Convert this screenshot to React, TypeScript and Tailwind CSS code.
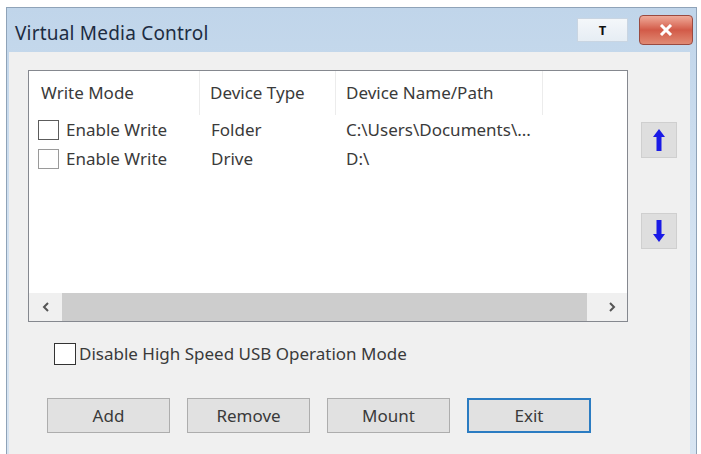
const font = { fontFamily: '"Noto Sans", "Open Sans", sans-serif' };

const CheckBox = ({ tone }: { tone: string }) => (
    <span className={`block h-[20px] w-[21px] shrink-0 border bg-white ${tone}`} />
);

const ArrowBtn = ({ down }: { down?: boolean }) => (
    <div className="flex h-[36px] w-[36px] items-center justify-center border border-[#cfcfcf] bg-[#dedede]">
        <svg width="14" height="24" viewBox="0 0 14 24" className={down ? "rotate-180" : ""}>
            <path d="M7 1 L13 9 L9.5 9 L9.5 23 L4.5 23 L4.5 9 L1 9 Z" fill="#1a1ae6" />
        </svg>
    </div>
);

const Chevron = ({ right }: { right?: boolean }) => (
    <svg width="8" height="10" viewBox="0 0 8 10">
        <path d={right ? "M2 1 L6 5 L2 9" : "M6 1 L2 5 L6 9"} stroke="#555" strokeWidth="2" fill="none" />
    </svg>
);

const rows = [
    { type: "Folder", path: "C:\\Users\\Documents\\...", tone: "border-[#5c5c5c]" },
    { type: "Drive", path: "D:\\", tone: "border-[#9a9a9a]" },
];

export default function App() {
    return (
        <div className="h-[454px] w-[701px] overflow-hidden bg-white pl-[6px] pt-[7px] text-[17px] leading-[22px] text-[#3a3a3a]" style={font}>
            <div className="flex h-[460px] w-[691px] flex-col border border-[#8fa3b8] bg-gradient-to-b from-[#c0d5ea] via-[#d3e2f1] to-[#d8e5f2]">
                {/* title bar */}
                <div className="flex h-[44px] shrink-0 items-start">
                    <span className="ml-[8px] mt-[12px] text-[19px] leading-[26px] tracking-[0.2px] text-[#1d2c42]">Virtual Media Control</span>
                    <div className="ml-auto mr-[3px] mt-[7px] flex items-start gap-[11px]">
                        <div className="mt-[3px] flex h-[24px] w-[51px] items-center justify-center border border-[#c9d5e2] bg-gradient-to-b from-[#f4f7fa] to-[#e6edf4] text-[13px] font-bold leading-none text-[#111]">
                            T
                        </div>
                        <div className="flex h-[30px] w-[54px] items-center justify-center rounded-[4px] border border-[#9a4a40] bg-gradient-to-b from-[#eeaa9a] via-[#d25a48] to-[#e08a74]">
                            <svg width="14" height="12" viewBox="0 0 14 12">
                                <path d="M2 1 L12 11 M12 1 L2 11" stroke="white" strokeWidth="3" />
                            </svg>
                        </div>
                    </div>
                </div>
                {/* client area */}
                <div className="ml-[2px] mr-[6px] flex-1 bg-[#f0f0f0] pl-[19px] pt-[18px]">
                    <div className="flex items-start">
                        <div className="flex h-[252px] w-[600px] flex-col border border-[#85888f] bg-white">
                            <div className="flex h-[44px] shrink-0 items-center">
                                <div className="flex h-full w-[171px] items-center border-r border-[#ececec] pl-[12px]">Write Mode</div>
                                <div className="flex h-full w-[136px] items-center border-r border-[#ececec] pl-[10px]">Device Type</div>
                                <div className="flex h-full w-[207px] items-center border-r border-[#ececec] pl-[10px]">Device Name/Path</div>
                            </div>
                            {rows.map((r) => (
                                <div key={r.type} className="flex h-[29px] items-center">
                                    <div className="flex w-[171px] items-center gap-[7px] pl-[9px]">
                                        <CheckBox tone={r.tone} />
                                        <span>Enable Write</span>
                                    </div>
                                    <div className="w-[136px] pl-[11px]">{r.type}</div>
                                    <div className="pl-[10px]">{r.path}</div>
                                </div>
                            ))}
                            <div className="mt-auto flex h-[28px] shrink-0">
                                <div className="flex w-[33px] items-center justify-center bg-[#f0f0f0]">
                                    <Chevron />
                                </div>
                                <div className="flex-1 bg-[#cdcdcd]" />
                                <div className="flex w-[40px] items-center justify-center bg-[#f0f0f0] pl-[10px]">
                                    <Chevron right />
                                </div>
                            </div>
                        </div>
                        <div className="ml-[13px] mt-[52px] flex flex-col gap-[55px]">
                            <ArrowBtn />
                            <ArrowBtn down />
                        </div>
                    </div>
                    <div className="ml-[26px] mt-[21px] flex items-center gap-[3px]">
                        <span className="block h-[22px] w-[22px] border border-[#333] bg-white" />
                        <span>Disable High Speed USB Operation Mode</span>
                    </div>
                    <div className="ml-[19px] mt-[33px] flex gap-[17px]">
                        {["Add", "Remove", "Mount"].map((b) => (
                            <button key={b} className="flex h-[35px] w-[123px] items-center justify-center border border-[#adadad] bg-[#e1e1e1]">
                                {b}
                            </button>
                        ))}
                        <button className="flex h-[35px] w-[124px] items-center justify-center border-2 border-[#2b7cc2] bg-[#e1e1e1]">
                            Exit
                        </button>
                    </div>
                </div>
            </div>
        </div>
    );
}
